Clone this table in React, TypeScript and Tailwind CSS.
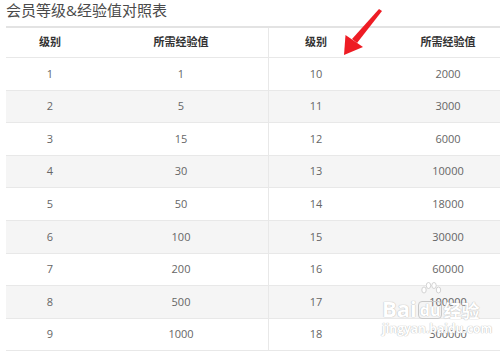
import React from 'react';

const rows: [string, string, string, string][] = [
  ['1', '1', '10', '2000'],
  ['2', '5', '11', '3000'],
  ['3', '15', '12', '6000'],
  ['4', '30', '13', '10000'],
  ['5', '50', '14', '18000'],
  ['6', '100', '15', '30000'],
  ['7', '200', '16', '60000'],
  ['8', '500', '17', '100000'],
  ['9', '1000', '18', '300000'],
];

const font = { fontFamily: '"Open Sans", "Noto Sans CJK SC", sans-serif' };

const Row: React.FC<{ cells: string[]; head?: boolean; shaded?: boolean }> = ({ cells, head, shaded }) => (
  <div
    className={`flex items-center border-b border-[#e8e8e8] ${head ? 'h-[30px] font-bold text-[#333]' : 'h-[32.6px] text-[#666]'} ${shaded ? 'bg-[#f5f5f5]' : 'bg-white'}`}
  >
    <div className="w-[88px] shrink-0 text-center">{cells[0]}</div>
    <div className="w-[175px] shrink-0 text-center border-r border-[#e8e8e8] h-full flex items-center justify-center">
      {cells[1]}
    </div>
    <div className="w-[94px] shrink-0 text-center">{cells[2]}</div>
    <div className="w-[170px] shrink-0 text-center">{cells[3]}</div>
  </div>
);

const Arrow = () => (
  <svg className="absolute left-[336px] top-[4px]" width="52" height="56" viewBox="336 4 52 56">
    <path d="M379 9 L382 11 L357 43 L352 39 Z" fill="#ee1c24" />
    <path d="M344 55 L345.5 35 L363 47 Z" fill="#ee1c24" />
  </svg>
);

const Watermark = () => (
  <div className="absolute left-[382px] top-[296px] text-white select-none" style={font}>
    <div className="flex items-end gap-[1px] text-[22px] font-bold leading-none [text-shadow:0_0_1px_#bbb,0_0_1px_#bbb]">
      <span>Bai</span>
      <span className="relative">
        <svg className="absolute left-[2px] -top-[14px]" width="22" height="16" viewBox="0 0 22 16">
          <g fill="#fff" stroke="#c8c8c8" strokeWidth="0.8">
            <ellipse cx="4" cy="8" rx="2.2" ry="3" />
            <ellipse cx="8.5" cy="3.5" rx="2.2" ry="3" />
            <ellipse cx="14" cy="3.5" rx="2.2" ry="3" />
            <ellipse cx="18.5" cy="8" rx="2.2" ry="3" />
          </g>
        </svg>
        <span className="inline-block border border-[#c8c8c8] rounded-[4px] px-[1px] text-[16px] leading-[16px]">du</span>
      </span>
      <span className="text-[18px]" style={{ fontFamily: '"Noto Sans CJK SC", sans-serif' }}>经验</span>
    </div>
    <div className="mt-[4px] text-[12px] leading-none font-bold [text-shadow:0_0_1px_#bbb,0_0_1px_#bbb]">jingyan.baidu.com</div>
  </div>
);

export default function App() {
  return (
    <div className="relative w-[500px] h-[352px] overflow-hidden bg-white" style={font}>
      <div className="h-[26px] pl-[6px] text-[15px] leading-[20px] text-[#4a4a4a]">会员等级&amp;经验值对照表</div>
      <div className="ml-[6px] w-[527px] border-t-2 border-[#e3e3e3] text-[11px]">
        <Row head cells={['级别', '所需经验值', '级别', '所需经验值']} />
        {rows.map((r, i) => (
          <Row key={i} cells={r} shaded={i % 2 === 1} />
        ))}
      </div>
      <Arrow />
      <Watermark />
    </div>
  );
}
